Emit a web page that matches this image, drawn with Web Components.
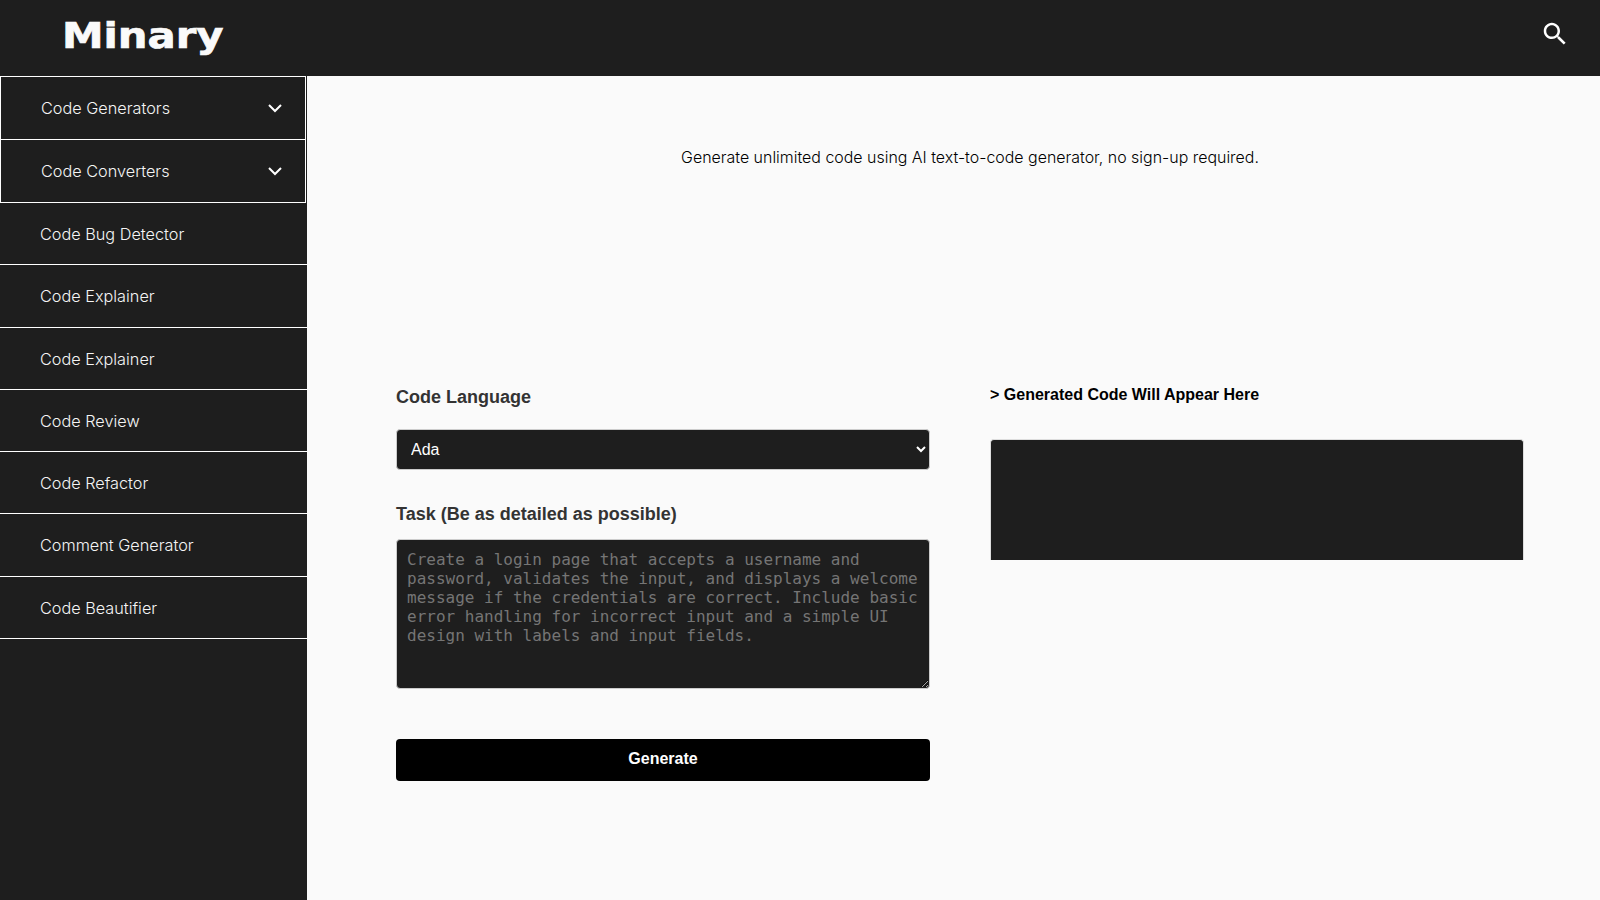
<!DOCTYPE html>
<html lang="en">
<head>
<meta charset="utf-8">
<title>Minary</title>
<style>
  html, body { margin: 0; height: 100%; background: #fafafa; }
  body { overflow: hidden; font-family: "Inter", "Liberation Sans", sans-serif; }
  .app { display: grid; grid-template-rows: 76px 1fr; grid-template-columns: 307px 1fr; height: 900px; }
  minary-header { grid-column: 1 / 3; }
</style>
</head>
<body>
<div class="app">
  <minary-header>Minary</minary-header>
  <minary-sidebar>
    <side-item expandable>Code Generators</side-item>
    <side-item expandable>Code Converters</side-item>
    <side-item>Code Bug Detector</side-item>
    <side-item>Code Explainer</side-item>
    <side-item>Code Explainer</side-item>
    <side-item>Code Review</side-item>
    <side-item>Code Refactor</side-item>
    <side-item>Comment Generator</side-item>
    <side-item>Code Beautifier</side-item>
  </minary-sidebar>
  <minary-main>
    <span slot="intro">Generate unlimited code using AI text-to-code generator, no sign-up required.</span>
    <code-form slot="form"></code-form>
    <code-output slot="output">&gt; Generated Code Will Appear Here</code-output>
  </minary-main>
</div>

<script>
class MinaryHeader extends HTMLElement {
  constructor() {
    super();
    this.attachShadow({ mode: "open" });
    this.shadowRoot.innerHTML = `
    <style>
      :host { display: flex; align-items: center; justify-content: space-between; background: #1e1e1e; padding: 0 30px 0 62px; }
      .logo { font: 700 36px/1 "DejaVu Sans", sans-serif; color: #fafafa; -webkit-text-stroke: 0.7px #fafafa; transform: scaleX(1.16); transform-origin: left center; margin-bottom: 4px; }
      svg { width: 30px; height: 30px; fill: #fff; margin-bottom: 8px; }
    </style>
    <div class="logo"><slot></slot></div>
    <svg viewBox="0 0 24 24"><path d="M15.5 14h-.79l-.28-.27C15.41 12.59 16 11.11 16 9.5 16 5.91 13.09 3 9.5 3S3 5.91 3 9.5 5.91 16 9.5 16c1.61 0 3.09-.59 4.23-1.57l.27.28v.79l5 4.99L20.49 19l-4.99-5zm-6 0C7.01 14 5 11.99 5 9.5S7.01 5 9.5 5 14 7.01 14 9.5 11.99 14 9.5 14z"/></svg>`;
  }
}

class MinarySidebar extends HTMLElement {
  constructor() {
    super();
    this.attachShadow({ mode: "open" });
    this.shadowRoot.innerHTML = `
    <style>
      :host { display: flex; flex-direction: column; background: #1e1e1e; }
    </style>
    <slot></slot>`;
  }
}

class SideItem extends HTMLElement {
  constructor() {
    super();
    this.attachShadow({ mode: "open" });
    const chevron = this.hasAttribute("expandable") ? `
      <svg viewBox="0 0 14 9"><path d="M1 1l6 6 6-6" fill="none" stroke="#fff" stroke-width="2"/></svg>` : "";
    this.shadowRoot.innerHTML = `
    <style>
      :host {
        display: flex; align-items: center; justify-content: space-between; box-sizing: border-box;
        height: 62.25px; padding: 1px 0 0 40px; border-bottom: 1px solid #fff;
        font: 16.25px "Inter", "Liberation Sans", sans-serif; font-weight: 300; color: #f5f5f5;
      }
      :host([expandable]) {
        width: 306px; height: 63px; padding: 0 23px 1px 40px; border: 1px solid #fff; border-top: 0;
      }
      :host([expandable]:first-child) { height: 64px; border-top: 1px solid #fff; }
      svg { width: 14px; height: 9px; margin-top: 2px; }
    </style>
    <slot></slot>${chevron}`;
  }
}

class MinaryMain extends HTMLElement {
  constructor() {
    super();
    this.attachShadow({ mode: "open" });
    this.shadowRoot.innerHTML = `
    <style>
      :host { display: block; padding: 70px 76px 0 89px; color: #000; }
      .intro { padding-left: 20px; text-align: center; font: 15.95px/24px "Inter", "Liberation Sans", sans-serif; font-weight: 300; color: #000; }
      .columns { display: grid; grid-template-columns: 534px 534px; column-gap: 60px; margin-top: 216px; }
    </style>
    <div class="intro"><slot name="intro"></slot></div>
    <div class="columns">
      <slot name="form"></slot>
      <slot name="output"></slot>
    </div>`;
  }
}

class CodeForm extends HTMLElement {
  constructor() {
    super();
    this.attachShadow({ mode: "open" });
    this.shadowRoot.innerHTML = `
    <style>
      :host { display: flex; flex-direction: column; padding-top: 1px; font-family: "Liberation Sans", sans-serif; }
      label { font-size: 18px; font-weight: 700; line-height: 21px; color: #333; }
      select, textarea {
        box-sizing: border-box; width: 100%; background: #1e1e1e; color: #fff;
        border: 1px solid #ccc; border-radius: 4px; outline: 0;
      }
      select { height: 41px; margin: 21px 0 34px; padding: 0 10px; font: 16px "Liberation Sans", sans-serif; }
      textarea { height: 150px; margin-top: 14px; padding: 10px; font: 16px "DejaVu Sans Mono", monospace; }
      textarea::placeholder { color: #757575; opacity: 1; }
      button {
        height: 42px; margin-top: 50px; padding: 0 0 2px; border: 0; border-radius: 4px; background: #000; color: #fff;
        font: 700 16px "Liberation Sans", sans-serif;
      }
    </style>
    <label for="lang">Code Language</label>
    <select id="lang"><option>Ada</option></select>
    <label for="task">Task (Be as detailed as possible)</label>
    <textarea id="task" placeholder="Create a login page that accepts a username and password, validates the input, and displays a welcome message if the credentials are correct. Include basic error handling for incorrect input and a simple UI design with labels and input fields."></textarea>
    <button type="button">Generate</button>`;
  }
}

class CodeOutput extends HTMLElement {
  constructor() {
    super();
    this.attachShadow({ mode: "open" });
    this.shadowRoot.innerHTML = `
    <style>
      :host { display: block; }
      h2 { margin: 0 0 35px; font: 700 16px/18px "Liberation Sans", sans-serif; color: #000; }
      .box { box-sizing: border-box; height: 121px; background: #1e1e1e; border: 1px solid #ddd; border-bottom: 0; border-radius: 4px 4px 0 0; }
    </style>
    <h2><slot></slot></h2>
    <div class="box"></div>`;
  }
}

customElements.define("minary-header", MinaryHeader);
customElements.define("minary-sidebar", MinarySidebar);
customElements.define("side-item", SideItem);
customElements.define("minary-main", MinaryMain);
customElements.define("code-form", CodeForm);
customElements.define("code-output", CodeOutput);
</script>
</body>
</html>
